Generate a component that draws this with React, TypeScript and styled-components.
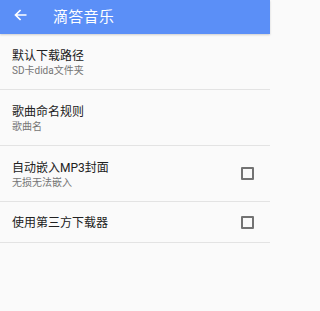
import styled, { createGlobalStyle } from "styled-components";

const GlobalStyle = createGlobalStyle`
    html, body {
        margin: 0;
        padding: 0;
        background: #fafafa;
    }
    body {
        font-family: Roboto, "Noto Sans CJK SC", sans-serif;
    }
`;

const Page = styled.div`
    width: 270px;
    height: 311px;
    background: #fafafa;
    display: flex;
    flex-direction: column;
`;

const Toolbar = styled.div`
    height: 34px;
    background: #5b8ff7;
    display: flex;
    align-items: center;
    box-shadow: 0 1px 2px rgba(0, 0, 0, 0.18);
    position: relative;
    z-index: 1;
`;

const BackButton = styled.div`
    width: 40px;
    height: 34px;
    display: flex;
    align-items: center;
    justify-content: center;
    margin-top: -5px;
`;

const Title = styled.div`
    color: #ffffff;
    font-size: 15px;
    letter-spacing: 0.3px;
    margin-left: 13px;
    margin-top: -3px;
`;

const List = styled.div`
    display: flex;
    flex-direction: column;
`;

const Row = styled.div<{ $tall?: boolean }>`
    height: ${(p) => (p.$tall ? "55px" : "40px")};
    border-bottom: 1px solid #e3e3e3;
    display: flex;
    align-items: center;
    justify-content: space-between;
    padding: 0 16px 0 12px;
`;

const Texts = styled.div`
    display: flex;
    flex-direction: column;
    padding-top: 2px;
`;

const Label = styled.div`
    color: #212121;
    font-size: 12px;
    line-height: 16px;
`;

const Sub = styled.div`
    color: #757575;
    font-size: 10px;
    line-height: 13px;
`;

const Check = styled.div`
    width: 9px;
    height: 9px;
    border: 2px solid #737373;
    border-radius: 1px;
`;

const items = [
    { label: "默认下载路径", sub: "SD卡dida文件夹", check: false },
    { label: "歌曲命名规则", sub: "歌曲名", check: false },
    { label: "自动嵌入MP3封面", sub: "无损无法嵌入", check: true },
    { label: "使用第三方下载器", sub: "", check: true },
];

const App = () => {
    return (
        <Page>
            <GlobalStyle />
            <Toolbar>
                <BackButton>
                    <svg width="13" height="12" viewBox="0 0 13 12">
                        <path
                            d="M12.5 6H1.8M6.6 1L1.5 6l5.1 5"
                            stroke="#fff"
                            strokeWidth="1.7"
                            fill="none"
                        />
                    </svg>
                </BackButton>
                <Title>滴答音乐</Title>
            </Toolbar>
            <List>
                {items.map((it) => (
                    <Row key={it.label} $tall={!!it.sub}>
                        <Texts>
                            <Label>{it.label}</Label>
                            {it.sub && <Sub>{it.sub}</Sub>}
                        </Texts>
                        {it.check && <Check />}
                    </Row>
                ))}
            </List>
        </Page>
    );
};

export default App;
